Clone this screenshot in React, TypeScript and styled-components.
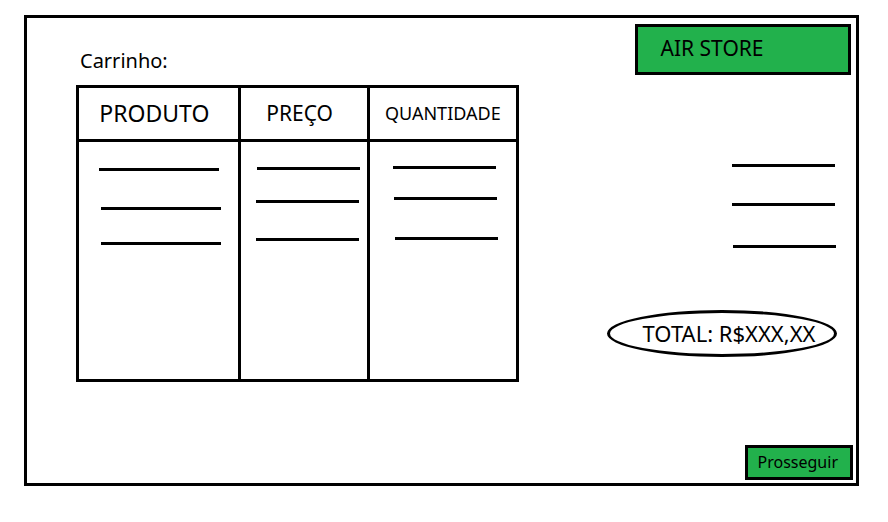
import React from "react";
import styled, { createGlobalStyle } from "styled-components";

const INK = "#000";
const GREEN = "#22b14c";

const GlobalStyle = createGlobalStyle`
  *, *::before, *::after { box-sizing: border-box; }
  body {
    margin: 0;
    background: #fff;
    color: ${INK};
    font-family: "Noto Sans", "Open Sans", sans-serif;
    font-weight: 400;
  }
`;

const Page = styled.div`
  display: flex;
  min-height: 100vh;
  padding: 15px 29px 36px 24px;
`;

const Frame = styled.main`
  flex: 1;
  display: grid;
  grid-template-columns: minmax(0, 443fr) minmax(0, 246fr);
  column-gap: 88px;
  padding: 6px 3px 3px 49px;
  border: 3px solid ${INK};
`;

const CartSection = styled.section`
  padding-top: 23px;
`;

const Title = styled.h1`
  margin: 0 0 10px 4px;
  font-size: 20px;
  line-height: 28px;
  font-weight: inherit;
`;

const CartTable = styled.table`
  width: 100%;
  table-layout: fixed;
  border: 3px solid ${INK};
  border-collapse: separate;
  border-spacing: 0;
`;

const HeadCell = styled.th<{ $size: number; $share: string }>`
  width: ${(p) => p.$share};
  height: 54px;
  padding: 0 8px 2px 0;
  border-bottom: 3px solid ${INK};
  font-size: ${(p) => p.$size}px;
  line-height: 28px;
  font-weight: inherit;
  text-align: center;

  &:not(:last-child) {
    border-right: 3px solid ${INK};
  }

  &:last-child {
    padding-right: 0;
  }
`;

const BodyCell = styled.td<{ $height: number }>`
  height: ${(p) => p.$height}px;
  padding: 0;
  vertical-align: top;

  &:not(:last-child) {
    border-right: 3px solid ${INK};
  }
`;

const Sketch = styled.svg`
  display: block;
  max-width: 100%;
  fill: ${INK};
`;

const Summary = styled.aside`
  display: flex;
  flex-direction: column;
  align-items: flex-end;
`;

const Brand = styled.header`
  width: 88%;
  margin-right: 2px;
  padding: 7px 23px 9px;
  border: 3px solid ${INK};
  background: ${GREEN};
  font-size: 21px;
  line-height: 29px;
`;

const Amounts = styled.div`
  margin: 89px 16px 61px 0;
`;

const Total = styled.p`
  width: 230px;
  margin: 0 16px 0 0;
  padding: 6px 0 7px 14px;
  border: 3px solid ${INK};
  border-radius: 50%;
  font-size: 22px;
  line-height: 28px;
  text-align: center;
  white-space: nowrap;
`;

const ProceedButton = styled.button`
  margin-top: auto;
  padding: 4px 12px 5px 10px;
  border: 3px solid ${INK};
  background: ${GREEN};
  color: ${INK};
  font: inherit;
  font-size: 16px;
  line-height: 20px;
  cursor: pointer;
`;

type Stroke = { x: number; y: number; w: number };

const columns = [
  { label: "PRODUTO", size: 23, share: "37%" },
  { label: "PREÇO", size: 21, share: "29.5%" },
  { label: "QUANTIDADE", size: 18, share: "auto" },
];

const rows: { height: number; cells: Stroke[] }[] = [
  { height: 48, cells: [{ x: 20, y: 26, w: 120 }, { x: 16, y: 25, w: 103 }, { x: 23, y: 24, w: 103 }] },
  { height: 36, cells: [{ x: 22, y: 17, w: 120 }, { x: 15, y: 10, w: 103 }, { x: 24, y: 7, w: 103 }] },
  { height: 153, cells: [{ x: 22, y: 16, w: 120 }, { x: 15, y: 12, w: 103 }, { x: 25, y: 11, w: 103 }] },
];

const amounts: Stroke[] = [
  { x: 0, y: 0, w: 103 },
  { x: 0, y: 39, w: 103 },
  { x: 1, y: 81, w: 103 },
];

function Strokes({ items, width, height }: { items: Stroke[]; width: number; height: number }) {
  return (
    <Sketch width={width} height={height} aria-hidden="true">
      {items.map((s) => (
        <rect key={s.y} x={s.x} y={s.y} width={s.w} height={3} />
      ))}
    </Sketch>
  );
}

export default function App() {
  return (
    <>
      <GlobalStyle />
      <Page>
        <Frame>
          <CartSection>
            <Title id="cart-title">Carrinho:</Title>
            <CartTable aria-labelledby="cart-title">
              <thead>
                <tr>
                  {columns.map((c) => (
                    <HeadCell key={c.label} scope="col" $size={c.size} $share={c.share}>
                      {c.label}
                    </HeadCell>
                  ))}
                </tr>
              </thead>
              <tbody>
                {rows.map((row) => (
                  <tr key={row.height}>
                    {row.cells.map((s, i) => (
                      <BodyCell key={columns[i].label} $height={row.height}>
                        <Strokes items={[s]} width={s.x + s.w} height={30} />
                      </BodyCell>
                    ))}
                  </tr>
                ))}
              </tbody>
            </CartTable>
          </CartSection>
          <Summary>
            <Brand>AIR STORE</Brand>
            <Amounts>
              <Strokes items={amounts} width={105} height={85} />
            </Amounts>
            <Total>TOTAL: R$XXX,XX</Total>
            <ProceedButton type="button">Prosseguir</ProceedButton>
          </Summary>
        </Frame>
      </Page>
    </>
  );
}
